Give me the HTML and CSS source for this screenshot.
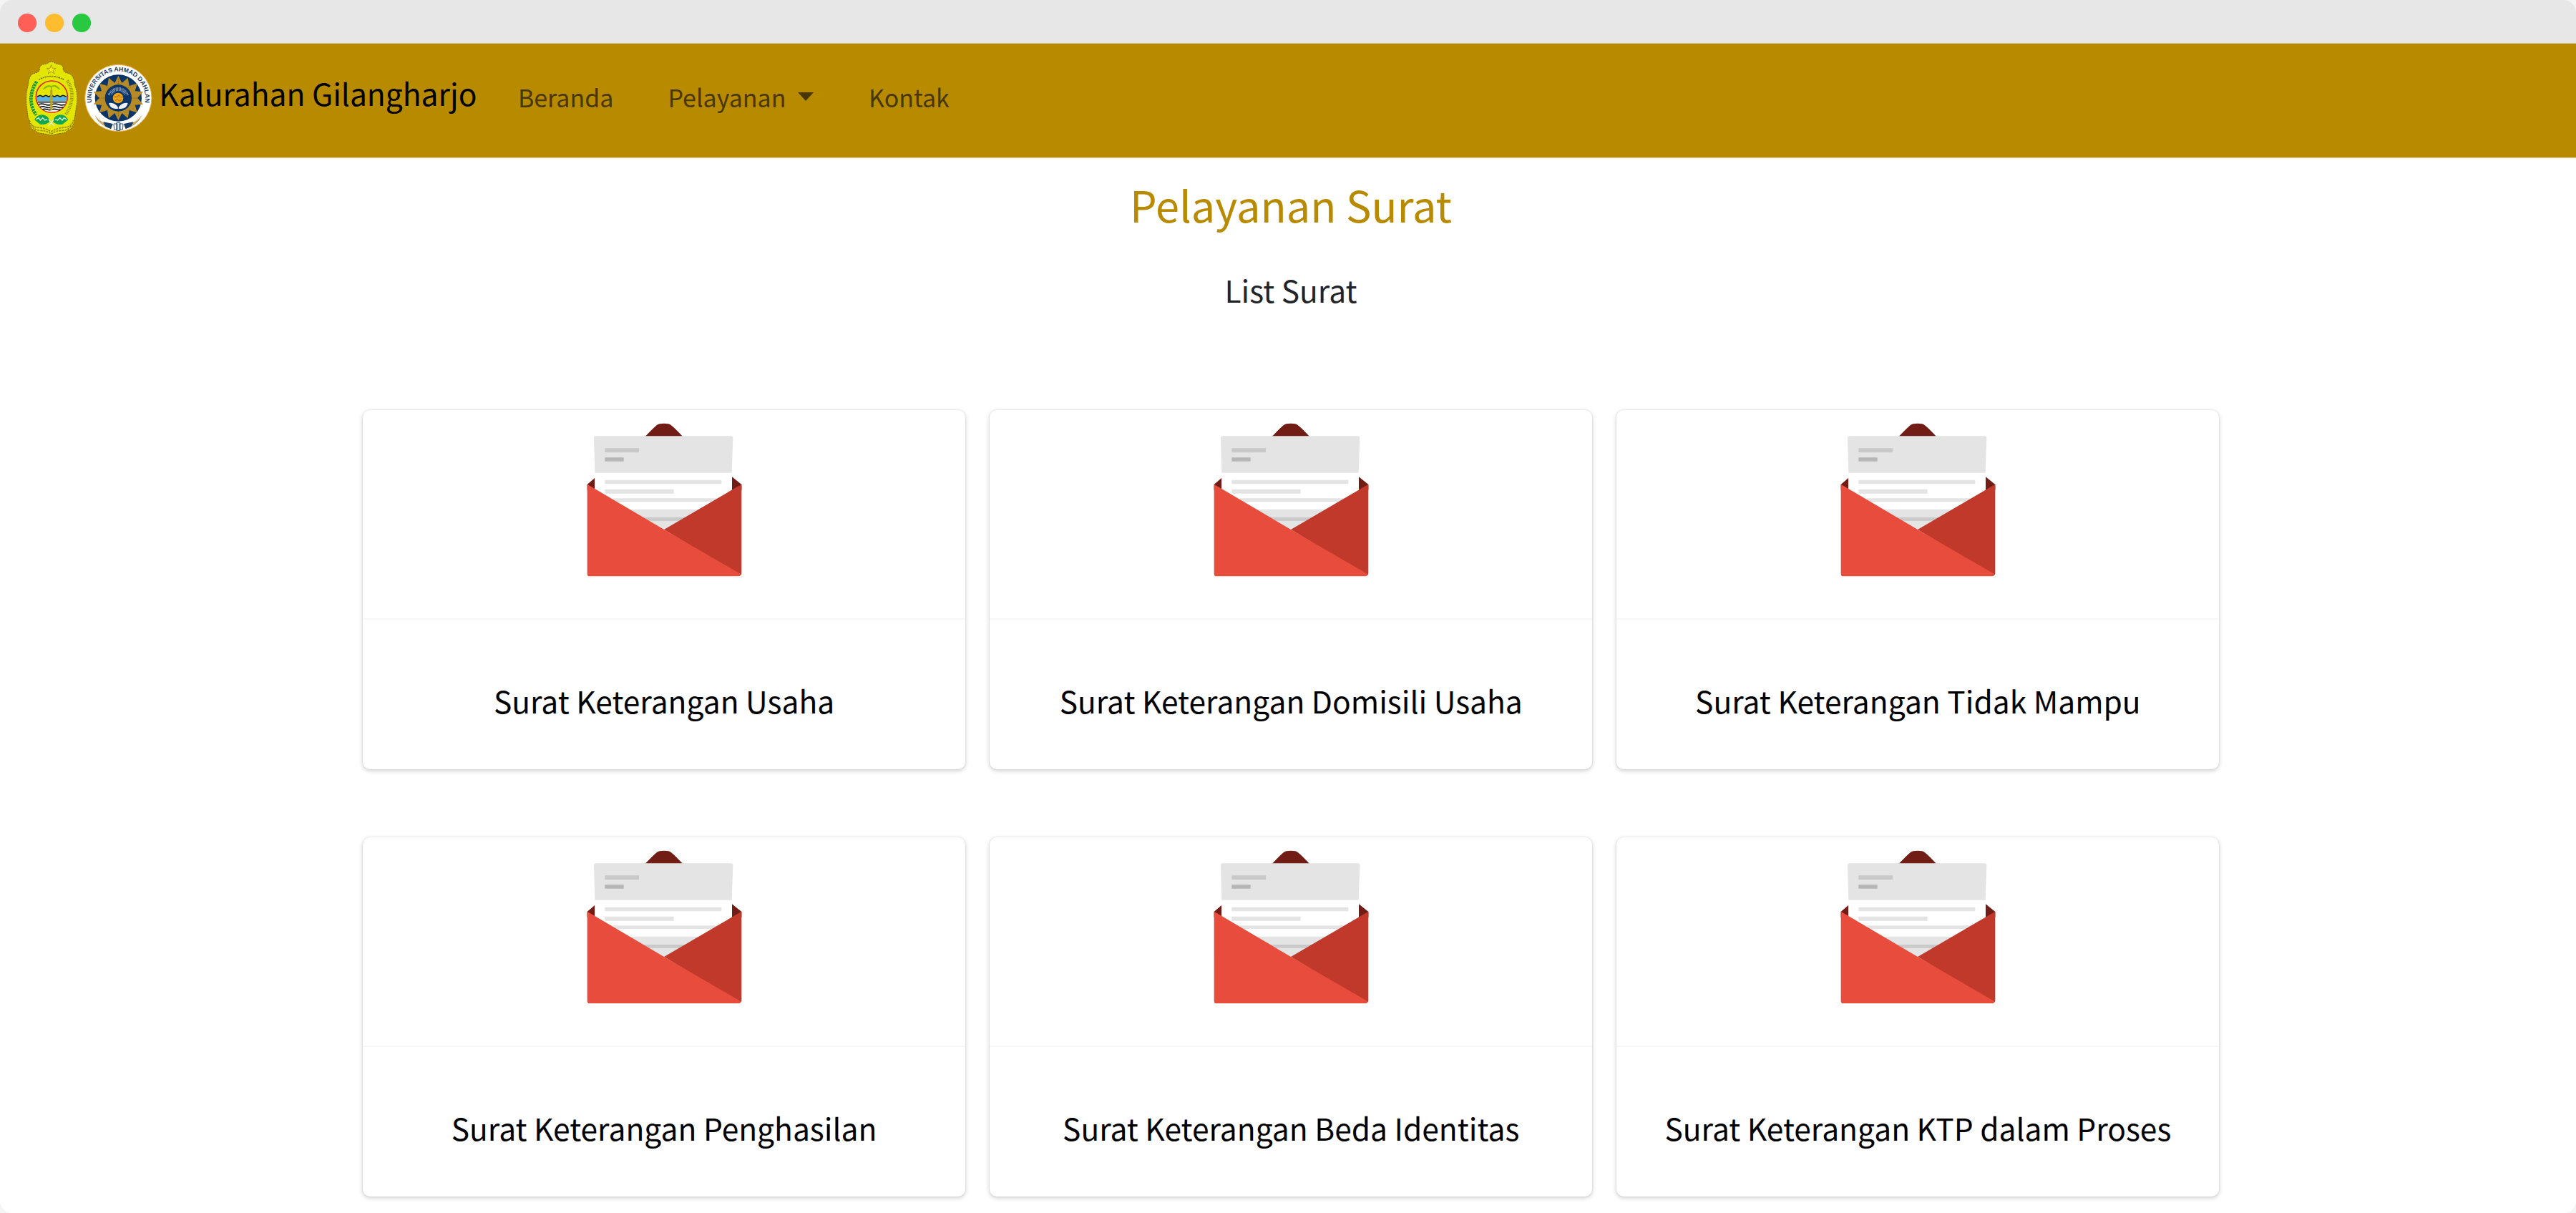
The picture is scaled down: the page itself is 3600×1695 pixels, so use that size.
FILE: index.html
```html
<!DOCTYPE html>
<html lang="id">
<head>
<meta charset="utf-8">
<title>Kalurahan Gilangharjo</title>
<link rel="stylesheet" href="styles.css">
</head>
<body>
<svg class="sprite" aria-hidden="true">
  <symbol id="mail" viewBox="60 34 651 644">
    <path d="M304 92Q340 54 354 43Q362 36 384 36Q406 36 413 43Q430 56 463 92Z" fill="#721c16"/>
    <path d="M62 292L94 264V315H62ZM709 292L669 260V315H709Z" fill="#721c16"/>
    <path d="M94 240H667L669 320L384 485L94 320Z" fill="#fff"/>
    <path d="M90 98Q90 89 99 89H664Q673 89 673 98L668 243H94Z" fill="#e4e4e4"/>
    <path d="M136 140H279V158H136Z" fill="#c9c9c9"/>
    <path d="M136 179H215V195H136Z" fill="#b6b6b6"/>
    <path d="M136 273H625V290H136ZM136 312H425V330H136ZM170 350H610V364H170ZM230 396H540L384 483Z" fill="#e4e4e4"/>
    <path d="M290 430H480L460 444H312Z" fill="#c9c9c9"/>
    <path d="M709 291V665Q709 672 703 673L384 481Z" fill="#c0392b"/>
    <path d="M62 291L384 481L706 668Q704 677 696 677H73Q62 677 62 666Z" fill="#e84c3d"/>
  </symbol>
</svg>
<div class="window">
  <div class="titlebar"><i class="dot red"></i><i class="dot amber"></i><i class="dot green"></i></div>
  <nav class="navbar">
    <a class="brand">
      <svg class="crest" viewBox="48 46 216 312">
        <path d="M155 47C166 47 170 55 183 57C200 58 206 66 205 80C208 96 224 92 236 100C250 111 251 128 253 145C264 170 266 205 260 235C256 255 256 275 250 290C252 302 246 312 241 320C238 333 226 331 219 339C204 350 182 345 155 356C128 345 106 350 92 339C85 331 73 333 70 320C62 310 64 300 62 290C54 275 56 255 52 235C48 205 50 170 58 145C60 128 62 111 74 100C86 92 104 96 106 80C105 66 112 58 128 57C141 55 145 47 155 47Z" fill="#e3e600" stroke="#6d6a10" stroke-width="2.5" stroke-dasharray="7 3"/>
        <path d="M155 60L160 74L175 74L163 83L168 97L155 88L142 97L147 83L135 74L150 74Z" fill="#f4ec21" stroke="#b09b00" stroke-width="3"/>
        <path d="M103 122Q155 94 208 122" fill="none" stroke="#77770c" stroke-width="5" stroke-dasharray="5 3 8 3"/>
        <path d="M222 126C250 165 248 220 216 268" fill="none" stroke="#8f8708" stroke-width="14" stroke-dasharray="3 4"/>
        <path d="M94 130C62 180 65 230 92 270" fill="none" stroke="#15a044" stroke-width="13" stroke-dasharray="9 3"/>
        <path d="M86 130C56 180 59 230 84 270" fill="none" stroke="#315e38" stroke-width="3" stroke-dasharray="4 4"/>
        <circle cx="157" cy="193" r="66" fill="#e3e600" stroke="#d7262e" stroke-width="5"/>
        <path d="M95 193H219Q220 202 217 212H97Q94 203 95 193Z" fill="#55b4e8"/>
        <path d="M97 212H217Q207 256 157 257Q107 256 97 212Z" fill="#fff"/>
        <path d="M96 193l12-5 12 5 12-5 12 5 12-5 12 5 12-5 12 5 12-5 14 5M98 216h118M101 226q14-5 28 0t28 0 28 0 27 0M107 237q12-5 25 0t25 0 25 0 24 0M118 247q10-4 20 0t20 0 20 0 16 0" fill="none" stroke="#161616" stroke-width="5"/>
        <path d="M155 251V148M122 163Q138 142 155 151Q174 140 190 163M130 157Q142 145 155 151Q170 144 183 157" fill="none" stroke="#82b715" stroke-width="5"/>
        <path d="M151 166h9v84h-9z" fill="#b9a323"/>
        <path d="M84 290Q98 264 125 270Q147 276 148 299Q132 313 108 309ZM226 290Q212 264 185 270Q163 276 162 299Q178 313 202 309Z" fill="#13a850"/>
        <path d="M90 289l12-7 7 10 10-10 9 10 10-4M220 289l-12-7-7 10-10-10-9 10-10-4M142 317l24-28M168 317l-24-28" fill="none" stroke="#dfeadd" stroke-width="4"/>
        <path d="M64 292Q68 320 98 322Q128 324 155 340Q182 324 212 322Q242 320 247 292M71 310Q80 334 109 335Q138 336 155 350Q172 336 201 335Q232 334 240 310" fill="none" stroke="#a38d08" stroke-width="5" stroke-dasharray="9 3"/>
      </svg>
      <svg class="seal" viewBox="294 56 284 288">
        <defs>
          <path id="arc" d="M333 247A113 113 0 1 1 539 247"/>
        </defs>
        <circle cx="436" cy="200" r="140" fill="#fff" stroke="#e8a93a" stroke-width="3"/>
        <circle cx="436" cy="200" r="98" fill="#0b3567"/>
        <path d="M436 106L451 137L476 115L482 149L515 139L506 171L540 174L516 200L540 226L506 229L515 261L482 251L476 285L451 263L436 294L421 263L396 285L390 251L357 261L366 229L332 226L356 200L332 174L366 171L357 139L390 149L396 115L421 137Z" fill="#b78a28"/>
        <path d="M436 120V280M356 200H516M379 143L493 257M493 143L379 257" stroke="#71632f" stroke-width="3" stroke-dasharray="4 4"/>
        <circle cx="436" cy="200" r="56" fill="#0b3567"/>
        <path d="M396 188A42 42 0 0 1 476 188M408 184A31 31 0 0 1 464 184" fill="none" stroke="#9eb3ca" stroke-width="8" stroke-dasharray="3 3"/>
        <circle cx="435" cy="200" r="22" fill="#eba21c"/>
        <path d="M419 195h14l5-8 7 9h11M424 211l8-7 8 9 10-8" fill="none" stroke="#ad710c" stroke-width="3"/>
        <path d="M396 221Q422 217 436 240Q450 217 476 221Q472 244 448 245H424Q401 244 396 221Z" fill="#eef2f6"/>
        <path d="M436 238V251" stroke="#0b3567" stroke-width="3"/>
        <path d="M337 268Q354 307 413 309L405 329Q350 311 337 268ZM535 268Q518 307 459 309L467 329Q522 311 535 268Z" fill="#a07b2d"/>
        <path d="M374 300L413 308L405 329L380 318ZM498 300L459 308L467 329L492 318Z" fill="#173d69"/>
        <path d="M342 276l28 37M352 282l28 36M530 276l-28 37M520 282l-28 36" stroke="#e7d7a6" stroke-width="3"/>
        <path d="M417 308h15v24h-13zM440 308h16l-2 24h-14zM428 304h16v32h-16z" fill="none" stroke="#32547c" stroke-width="3"/>
        <text class="seal-text"><textPath href="#arc" startOffset="50%">UNIVERSITAS AHMAD DAHLAN</textPath></text>
      </svg>
      <span class="brand-name">Kalurahan Gilangharjo</span>
    </a>
    <a class="link home">Beranda</a>
    <a class="link service">Pelayanan<i class="caret"></i></a>
    <a class="link contact">Kontak</a>
  </nav>
  <main class="content">
    <h1 class="title">Pelayanan Surat</h1>
    <h2 class="subtitle">List Surat</h2>
    <section class="cards">
      <article class="card"><div class="picture"><svg class="mail"><use href="#mail"/></svg></div><h3 class="name">Surat Keterangan Usaha</h3></article>
      <article class="card"><div class="picture"><svg class="mail"><use href="#mail"/></svg></div><h3 class="name">Surat Keterangan Domisili Usaha</h3></article>
      <article class="card"><div class="picture"><svg class="mail"><use href="#mail"/></svg></div><h3 class="name">Surat Keterangan Tidak Mampu</h3></article>
      <article class="card"><div class="picture"><svg class="mail"><use href="#mail"/></svg></div><h3 class="name">Surat Keterangan Penghasilan</h3></article>
      <article class="card"><div class="picture"><svg class="mail"><use href="#mail"/></svg></div><h3 class="name">Surat Keterangan Beda Identitas</h3></article>
      <article class="card"><div class="picture"><svg class="mail"><use href="#mail"/></svg></div><h3 class="name">Surat Keterangan KTP dalam Proses</h3></article>
    </section>
  </main>
</div>
</body>
</html>
```
FILE: styles.css
```css
* { box-sizing: border-box; }
body {
  margin: 0;
  background: #f4f4f4;
  font-family: "Noto Sans CJK SC", "Noto Sans", sans-serif;
  color: #212529;
}
.sprite { display: block; width: 0; height: 0; }
.window {
  height: 1695px;
  border-radius: 17px;
  overflow: hidden;
  background: #fff;
}
.titlebar {
  display: flex;
  align-items: center;
  gap: 12.5px;
  height: 61px;
  padding: 4px 0 0 25px;
  background: #e7e7e7;
  border-bottom: 1px solid #d2cbb0;
}
.dot { width: 25.5px; height: 25.5px; border-radius: 50%; }
.red { background: #ff5f57; }
.amber { background: #febc2e; }
.green { background: #28c840; }
.navbar {
  display: flex;
  align-items: flex-start;
  height: 160px;
  padding-left: 36px;
  background: #b88a00;
  border-bottom: 1px solid #e2d29c;
}
.brand { display: flex; color: #000; }
.crest { width: 72px; height: 104px; margin-top: 24.5px; }
.seal { width: 94.7px; height: 96px; margin: 27.5px 0 0 10px; }
.seal-text {
  font: bold 26px "Liberation Sans", sans-serif;
  fill: #173d69;
  text-anchor: middle;
}
.brand-name {
  margin: 39px 0 0 9.5px;
  font-size: 42.5px;
  line-height: 60px;
  white-space: nowrap;
}
.link {
  display: flex;
  margin-top: 50px;
  font-size: 34px;
  line-height: 50px;
  color: #483700;
  white-space: nowrap;
}
.home { margin-left: 57.5px; }
.service { margin-left: 76px; }
.contact { margin-left: 76.5px; }
.caret {
  margin: 18px 0 0 17px;
  width: 0;
  height: 0;
  border: 11px solid transparent;
  border-top: 12px solid #483700;
  border-bottom: 0;
}
.content { display: flex; flex-direction: column; padding: 24px 0 0 507px; }
.title, .subtitle {
  margin: 0 0 0 -3px;
  width: 2600px;
  text-align: center;
  font-weight: 400;
}
.title { font-size: 59.5px; line-height: 80px; color: #b88a00; }
.subtitle { margin-top: 50px; font-size: 42.5px; line-height: 60px; }
.cards {
  display: grid;
  grid-template-columns: repeat(3, 842px);
  grid-auto-rows: 502px;
  gap: 94.5px 34.2px;
  margin-top: 138px;
}
.card {
  border-radius: 10px;
  background: #fff;
  box-shadow: 0 2px 6px rgba(0, 0, 0, 0.2), 0 0 2px rgba(0, 0, 0, 0.13);
}
.picture {
  height: 293px;
  padding-top: 18px;
  border-bottom: 2px solid #f7f7f7;
  text-align: center;
}
.mail { width: 217px; height: 214.7px; }
.name {
  margin: 83px 0 0;
  font-size: 42.5px;
  line-height: 60px;
  font-weight: 400;
  text-align: center;
  white-space: nowrap;
  color: #000;
}
```
